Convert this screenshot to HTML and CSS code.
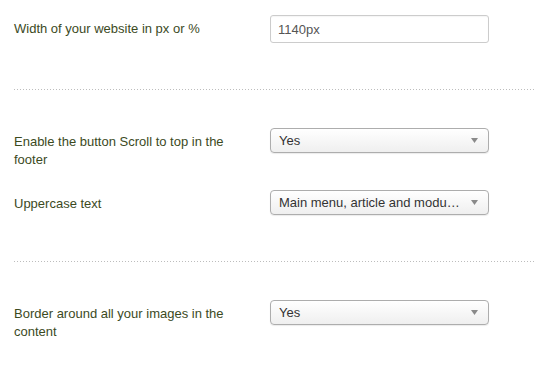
FILE: index.html
```html
<!DOCTYPE html>
<html lang="en">
<head>
    <meta charset="UTF-8">
    <meta name="viewport" content="width=device-width, initial-scale=1.0">
    <title>Template settings</title>
    <link rel="stylesheet" href="styles.css">
</head>
<body>
    <div class="settings">
        <div class="row row-input">
            <label class="label" for="site-width">Width of your website in px or %</label>
            <input class="text-input" type="text" id="site-width" value="1140px">
        </div>

        <div class="separator"></div>

        <div class="row row-first">
            <div class="label">Enable the button Scroll to top in the footer</div>
            <div class="select">
                <span class="select-value">Yes</span>
                <svg class="arrow" width="7" height="5" viewBox="0 0 7 5"><path d="M0 0H7L3.5 5Z" fill="#8a8a8a"/></svg>
            </div>
        </div>

        <div class="row row-next">
            <div class="label">Uppercase text</div>
            <div class="select">
                <span class="select-value">Main menu, article and modu…</span>
                <svg class="arrow" width="7" height="5" viewBox="0 0 7 5"><path d="M0 0H7L3.5 5Z" fill="#8a8a8a"/></svg>
            </div>
        </div>

        <div class="separator"></div>

        <div class="row row-first">
            <div class="label">Border around all your images in the content</div>
            <div class="select">
                <span class="select-value">Yes</span>
                <svg class="arrow" width="7" height="5" viewBox="0 0 7 5"><path d="M0 0H7L3.5 5Z" fill="#8a8a8a"/></svg>
            </div>
        </div>
    </div>
</body>
</html>
```

FILE: styles.css
```css
body {
    margin: 0;
    background-color: #fff;
    font-family: "Liberation Sans", Arial, sans-serif;
    font-size: 13px;
}

.settings {
    padding: 15px 0 0 14px;
}

.row {
    display: grid;
    grid-template-columns: 256px 219px;
    align-items: start;
}

.row-first {
    margin-top: 38px;
}

.row-next {
    margin-top: 21px;
}

.label {
    color: #3c4a1e;
    line-height: 18px;
    padding-top: 5px;
    padding-right: 16px;
}

.text-input {
    box-sizing: border-box;
    width: 219px;
    height: 28px;
    margin: 0;
    padding: 0 7px;
    border: 1px solid #ccc;
    border-radius: 3px;
    font-family: inherit;
    font-size: 13px;
    color: #555;
    box-shadow: inset 0 1px 1px rgba(0, 0, 0, 0.04);
}

.separator {
    margin-top: 43px;
    height: 1px;
    background-image: linear-gradient(to right, #bdbdbd 50%, transparent 50%);
    background-size: 3px 1px;
}

.row + .separator {
    margin-top: 46px;
}

.select {
    box-sizing: border-box;
    width: 219px;
    height: 25px;
    display: flex;
    align-items: center;
    padding: 0 10px 0 8px;
    border: 1px solid #adadad;
    border-radius: 4px;
    background-image: linear-gradient(to bottom, #fff, #efefef);
    box-shadow: 0 1px 1px rgba(0, 0, 0, 0.08);
    color: #333;
}

.select-value {
    flex: 1;
    white-space: nowrap;
    overflow: hidden;
}

.arrow {
    flex-shrink: 0;
}
```
